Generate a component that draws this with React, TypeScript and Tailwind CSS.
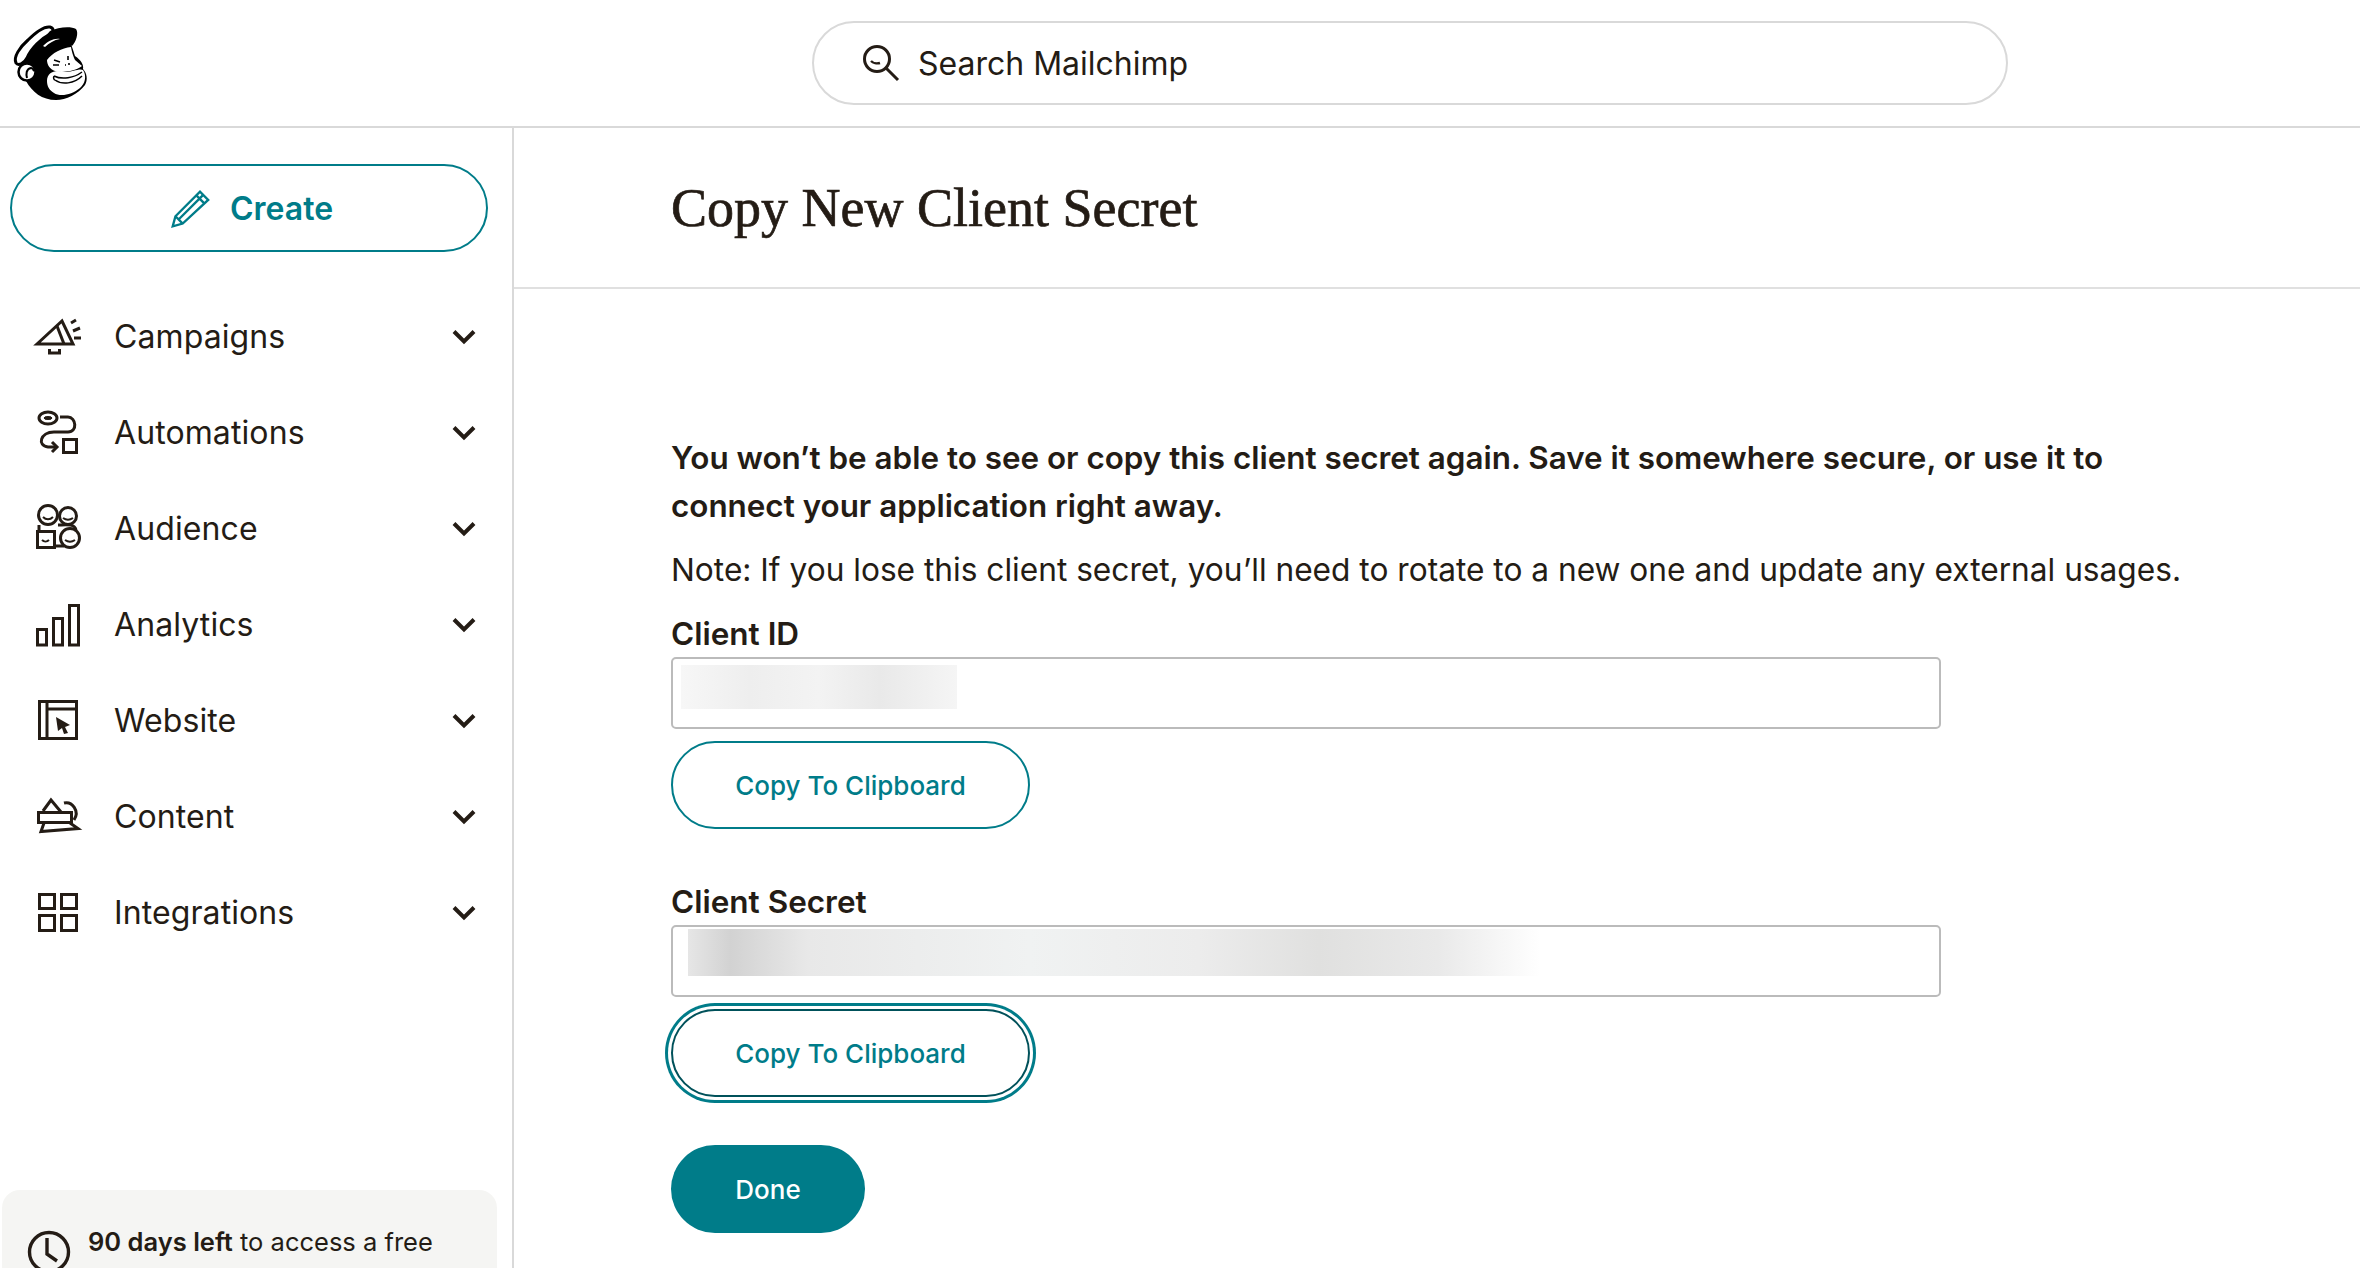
import React from "react";

const ink = "#241c15";

function Logo() {
  return (
    <svg width="110" height="126" viewBox="0 0 110 126" className="shrink-0">
      <path d="M30 48C40 38 55 34 66 36C72 44 73 50 75 56C81 60 84 65 83 69C87 73 88 80 85 85C78 94 66 100 56 100C42 100 32 92 26 81C18 81 16 71 20 66L24 58Z" fill="#000" />
      <path d="M16 63C13 57 20 47 28 40C35 33 44 26 50 27C54 28 54 32 50 34C42 38 31 48 27 58C24 64 18 66 16 63Z" fill="#fff" stroke="#000" strokeWidth="3" strokeLinejoin="round" />
      <path d="M50 31C58 27 71 26 76 29C79 33 76 42 72 46C62 37 46 38 38 45Z" fill="#000" />
      <path d="M43 46C48 41 54 38 60 39C54 40 49 43 45 47Z" fill="#fff" />
      <path d="M47 60C52 53 62 48 71 47C72 53 74 58 75 60L82 66C74 72 60 73 55 71C50 69 47 65 47 60Z" fill="#fff" />
      <path d="M47 81C47 72 55 69 65 72C72 72 80 68 83 70C87 76 85 84 80 88C72 95 60 97 54 93C49 90 47 86 47 81Z" fill="#fff" />
      <path d="M54 76C62 80 74 78 82 72M55 80C62 85 74 84 82 76M54 76C53 78 54 80 55 80" fill="none" stroke="#000" strokeWidth="1.5" />
      <path d="M54 60L60 62M53 65H59" fill="none" stroke="#000" strokeWidth="1.4" />
      <path d="M68 56V60M65 65H66M69 63V65" fill="none" stroke="#000" strokeWidth="1.6" />
      <circle cx="27" cy="72" r="8.5" fill="#fff" stroke="#000" strokeWidth="2.5" />
      <path d="M27 78C26 74 26 69 31 68C33 68 34 70 33 71" fill="none" stroke="#000" strokeWidth="2" />
    </svg>
  );
}

const s = { fill: "none", stroke: ink, strokeWidth: 3 } as const;

const icons: Record<string, React.ReactNode> = {
  Campaigns: (
    <g {...s}>
      <path d="M3 31L28 8L39 31Z" strokeLinejoin="miter" />
      <path d="M23 13L30 31" />
      <path d="M15.5 36V40H25.5V36" />
      <path d="M37 10L42 7M39 18L46 15M40 25H47" />
    </g>
  ),
  Automations: (
    <g {...s}>
      <ellipse cx="14" cy="9" rx="9" ry="6" />
      <ellipse cx="14" cy="9" rx="4" ry="1.5" fill={ink} strokeWidth="1" />
      <path d="M26 8H34C42 8 44 23 34 23H20C6 23 3 37 14 38H22" />
      <path d="M18 33L23 38L18 43" />
      <rect x="29.5" y="30.5" width="13" height="13" />
    </g>
  ),
  Audience: (
    <g {...s}>
      <circle cx="14" cy="10" r="9.5" />
      <circle cx="34" cy="11" r="8.5" />
      <circle cx="36" cy="33" r="9.5" />
      <rect x="3.5" y="26.5" width="17" height="16" fill="#fff" />
      <path d="M5 26V20M24 20C30 20 41 18 42 25M21 41H30" />
      <path d="M9 12C12 15 16 15 19 12M29 13C32 15 36 15 39 13M31 35C34 37 38 37 41 35M8 35C10 37 13 37 15 35" strokeWidth="2" />
    </g>
  ),
  Analytics: (
    <g {...s}>
      <rect x="3.5" y="28.5" width="9" height="15.5" />
      <rect x="19.5" y="17.5" width="9" height="26.5" />
      <rect x="35.5" y="4.5" width="9" height="39.5" />
    </g>
  ),
  Website: (
    <g {...s}>
      <rect x="5.5" y="4.5" width="37" height="37" />
      <path d="M13 4.5V41.5M13 12H42" />
      <path d="M22 20L36 28L31 30L34 36L30 37L28 31L24 34Z" fill={ink} stroke="none" />
    </g>
  ),
  Content: (
    <g {...s}>
      <path d="M9 18L17 7L27 19" />
      <path d="M30 10C38 8 46 18 40 27" />
      <rect x="4.5" y="19.5" width="33" height="10" />
      <path d="M10 30L7 38.5L44 35.5L36 30" />
    </g>
  ),
  Integrations: (
    <g {...s}>
      <rect x="5.5" y="5.5" width="15" height="14" />
      <rect x="27.5" y="5.5" width="15" height="14" />
      <rect x="5.5" y="26.5" width="15" height="15" />
      <rect x="27.5" y="26.5" width="15" height="15" />
    </g>
  ),
};

const nav = ["Campaigns", "Automations", "Audience", "Analytics", "Website", "Content", "Integrations"];

function NavRow({ label }: { label: string }) {
  return (
    <div className="h-[96px] flex items-center pl-[34px] pr-[37px] gap-[32px]">
      <svg width="48" height="48" viewBox="0 0 48 48" className="shrink-0 overflow-visible">
        {icons[label]}
      </svg>
      <span className="text-[32px] text-[#241c15] tracking-[0.1px]">{label}</span>
      <svg width="24" height="16" viewBox="0 0 24 16" className="ml-auto shrink-0 -mr-[1px]">
        <path d="M2 2.5L12 12.5L22 2.5" fill="none" stroke={ink} strokeWidth="4" />
      </svg>
    </div>
  );
}

function CopyButton({ focused }: { focused?: boolean }) {
  return (
    <button
      className={
        "block w-[359px] h-[88px] rounded-full bg-white border-2 text-[#007c89] text-[26px] font-medium " +
        (focused ? "border-[#00515a] shadow-[0_0_0_3px_#ffffff,0_0_0_6px_#007c89]" : "border-[#007c89]")
      }
    >
      Copy To Clipboard
    </button>
  );
}

function Field({ blurClass }: { blurClass: string }) {
  return (
    <div className="h-[72px] w-[1270px] rounded-[5px] border-2 border-[#bbbbbb] bg-white">
      <div className={blurClass} />
    </div>
  );
}

const labelClass = "block h-[48px] text-[31.5px] leading-[50px] font-semibold";

export default function App() {
  return (
    <div className="h-[1268px] w-[2360px] overflow-hidden bg-white font-['Inter','Noto_Sans',sans-serif] text-[#241c15] flex flex-col">
      <header className="h-[128px] shrink-0 border-b-2 border-[#d9d9d9] flex items-center">
        <Logo />
        <div className="ml-[702px] w-[1196px] h-[84px] rounded-full border-2 border-[#d9d9d9] flex items-center pl-[48px] gap-[18px]">
          <svg width="38" height="38" viewBox="0 0 38 38" className="shrink-0">
            <circle cx="15" cy="15" r="12.5" fill="none" stroke={ink} strokeWidth="3" />
            <path d="M24 24L36 36" stroke={ink} strokeWidth="3" />
            <path d="M9 17C11 19 15 20 18 19" fill="none" stroke={ink} strokeWidth="2.4" />
          </svg>
          <span className="text-[32px] pt-[2px]">Search Mailchimp</span>
        </div>
      </header>
      <div className="flex flex-1 min-h-0">
        <aside className="w-[514px] shrink-0 border-r-2 border-[#d9d9d9] flex flex-col overflow-hidden">
          <div className="pt-[36px] pl-[10px] pb-[37px]">
            <button className="w-[478px] h-[88px] rounded-full border-2 border-[#007c89] flex items-center justify-center pl-[5px] pt-[2px] gap-[20px] text-[#007c89] text-[32px] font-semibold">
              <svg width="40" height="40" viewBox="0 0 44 44">
                <g fill="none" stroke="#007c89" strokeWidth="2.6">
                  <path d="M3 41L6 30L33 3L42 12L14 38Z" />
                  <path d="M10 33L36 7M6 30L14 38M29 7L38 16" />
                </g>
              </svg>
              Create
            </button>
          </div>
          <nav>
            {nav.map((n) => (
              <NavRow key={n} label={n} />
            ))}
          </nav>
          <div className="mt-auto h-[78px] ml-[2px] w-[495px] rounded-t-[18px] bg-[#f5f5f3] overflow-hidden pl-[25px] pt-[38px] flex gap-[17px]">
            <svg width="44" height="44" viewBox="0 0 44 44" className="shrink-0 mt-[2px]">
              <circle cx="22" cy="22" r="19.5" fill="none" stroke={ink} strokeWidth="3.4" />
              <path d="M20 8V24L30 31" fill="none" stroke={ink} strokeWidth="3.4" />
            </svg>
            <p className="text-[25.5px] leading-[36px] -mt-[4px] whitespace-nowrap">
              <span className="font-semibold">90 days left</span> to access a free
            </p>
          </div>
        </aside>
        <main className="flex-1 min-w-0">
          <div className="h-[161px] border-b-2 border-[#e0e0e0] pl-[157px] flex items-center">
            <h1 className="font-['Liberation_Serif',serif] text-[54px] pt-[2px] font-normal [-webkit-text-stroke:0.7px_#241c15]">
              Copy New Client Secret
            </h1>
          </div>
          <div className="pl-[157px] pt-[145px]">
            <p className="text-[31.4px] leading-[48px] font-semibold w-[1530px]">
              You won’t be able to see or copy this client secret again. Save it somewhere secure, or use it to connect your application right away.
            </p>
            <p className="text-[31.66px] leading-[48px] mt-[16px] whitespace-nowrap">
              Note: If you lose this client secret, you’ll need to rotate to a new one and update any external usages.
            </p>
            <label className={labelClass + " mt-[15px]"}>Client ID</label>
            <Field blurClass="mt-[6px] ml-[8px] w-[276px] h-[44px] bg-[linear-gradient(90deg,#f7f7f7,#eeeeee_25%,#f3f3f3_50%,#e9e9e9_72%,#f5f5f5)]" />
            <div className="mt-[12px]">
              <CopyButton />
            </div>
            <label className={labelClass + " mt-[48px]"}>Client Secret</label>
            <Field blurClass="mt-[2px] ml-[15px] w-[852px] h-[47px] bg-[linear-gradient(90deg,#e6e6e6,#d2d2d2_5%,#e8e8e8_14%,#f0f2f2_40%,#ececec_60%,#e0e0df_74%,#e9e9e9_88%,#ffffff)]" />
            <div className="mt-[12px]">
              <CopyButton focused />
            </div>
            <button className="mt-[48px] block w-[194px] h-[88px] rounded-full bg-[#007c89] text-white text-[26px] font-medium">
              Done
            </button>
          </div>
        </main>
      </div>
    </div>
  );
}
